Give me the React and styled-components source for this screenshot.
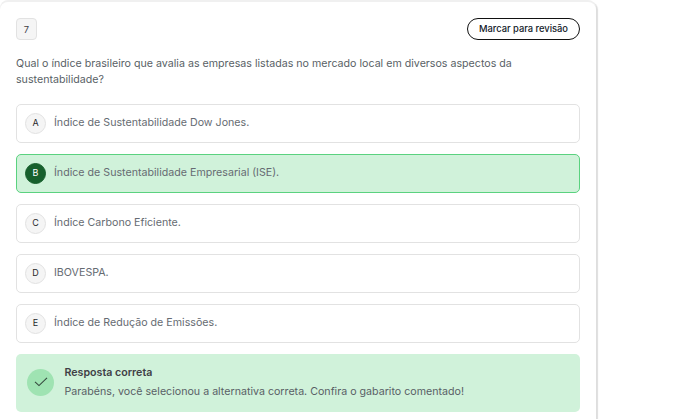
import React from "react";
import styled, { createGlobalStyle } from "styled-components";

const GlobalStyle = createGlobalStyle`
    html, body {
        margin: 0;
        padding: 0;
        height: 419px;
        overflow: hidden;
        background: #ffffff;
        font-family: "Inter", "Liberation Sans", sans-serif;
    }
`;

const Page = styled.div`
    width: 695px;
    height: 419px;
    overflow: hidden;
    box-sizing: border-box;
    padding-top: 2px;
    background: #ffffff;
`;

const Card = styled.div`
    width: 596px;
    height: 440px;
    box-sizing: border-box;
    padding: 16px 16px 0 16px;
    background: #ffffff;
    border-radius: 8px 8px 0 0;
    box-shadow: 0 -2px 0 #f0f0f0, 2px 0 1px #dedede;
`;

const Header = styled.div`
    display: flex;
    justify-content: space-between;
    align-items: center;
    height: 22px;
`;

const Number = styled.div`
    width: 21px;
    height: 22px;
    box-sizing: border-box;
    display: flex;
    align-items: center;
    justify-content: center;
    border: 1px solid #e2e2e2;
    border-radius: 4px;
    background: #f5f5f5;
    color: #3f3f46;
    font-size: 9.33px;
`;

const ReviewButton = styled.button`
    width: 113px;
    height: 22px;
    padding: 0 0 1px 0;
    border: 1px solid #111111;
    border-radius: 11px;
    background: #ffffff;
    color: #111827;
    font-family: inherit;
    font-size: 9.33px;
    font-weight: 500;
`;

const Question = styled.p`
    margin: 16px 0 16px 0;
    color: #595f66;
    font-size: 10.66px;
    line-height: 16px;
`;

const Options = styled.div`
    display: flex;
    flex-direction: column;
    gap: 11px;
`;

const Option = styled.div`
    height: 39px;
    box-sizing: border-box;
    display: flex;
    align-items: center;
    gap: 8px;
    padding-left: 8px;
    border: 1px solid ${(p) => (p.$selected ? "#5ad27f" : "#e2e2e2")};
    border-radius: 5px;
    background: ${(p) => (p.$selected ? "#d0f2da" : "#ffffff")};
`;

const Letter = styled.div`
    width: 21px;
    height: 21px;
    box-sizing: border-box;
    flex-shrink: 0;
    display: flex;
    align-items: center;
    justify-content: center;
    padding-bottom: 2px;
    border-radius: 50%;
    border: 1px solid ${(p) => (p.$selected ? "#17602d" : "#e2e2e2")};
    background: ${(p) => (p.$selected ? "#17602d" : "#f5f5f5")};
    color: ${(p) => (p.$selected ? "#ffffff" : "#27272a")};
    font-size: 9px;
    font-weight: 400;
`;

const OptionText = styled.span`
    color: #666b72;
    font-size: 10.66px;
    position: relative;
    top: -1px;
`;

const Feedback = styled.div`
    height: 58px;
    box-sizing: border-box;
    margin-top: 11px;
    display: flex;
    align-items: center;
    gap: 11px;
    padding: 0 0 2px 11px;
    border-radius: 5px;
    background: #d0f2da;
`;

const CheckCircle = styled.div`
    width: 27px;
    height: 27px;
    flex-shrink: 0;
    display: flex;
    align-items: center;
    justify-content: center;
    border-radius: 50%;
    background: #9fe3b2;
`;

const FeedbackBody = styled.div`
    display: flex;
    flex-direction: column;
    gap: 3px;
    margin-left: -0.5px;
`;

const FeedbackTitle = styled.strong`
    color: #3f3f46;
    font-size: 10.66px;
    font-weight: 600;
    line-height: 16px;
`;

const FeedbackText = styled.span`
    color: #595f66;
    font-size: 10.66px;
    line-height: 16px;
`;

const options = [
    ["A", "Índice de Sustentabilidade Dow Jones."],
    ["B", "Índice de Sustentabilidade Empresarial (ISE)."],
    ["C", "Índice Carbono Eficiente."],
    ["D", "IBOVESPA."],
    ["E", "Índice de Redução de Emissões."],
];

export default function App() {
    return (
        <Page>
            <GlobalStyle />
            <Card>
                <Header>
                    <Number>7</Number>
                    <ReviewButton>Marcar para revisão</ReviewButton>
                </Header>
                <Question>
                    Qual o índice brasileiro que avalia as empresas listadas no mercado local em diversos aspectos da sustentabilidade?
                </Question>
                <Options>
                    {options.map(([letter, text]) => (
                        <Option key={letter} $selected={letter === "B"}>
                            <Letter $selected={letter === "B"}>{letter}</Letter>
                            <OptionText>{text}</OptionText>
                        </Option>
                    ))}
                </Options>
                <Feedback>
                    <CheckCircle>
                        <svg width="14" height="10" viewBox="0 0 14 10" fill="none">
                            <path d="M1 4.8 L5 8.6 L13 0.8" stroke="#35493e" strokeWidth="1.1" />
                        </svg>
                    </CheckCircle>
                    <FeedbackBody>
                        <FeedbackTitle>Resposta correta</FeedbackTitle>
                        <FeedbackText>Parabéns, você selecionou a alternativa correta. Confira o gabarito comentado!</FeedbackText>
                    </FeedbackBody>
                </Feedback>
            </Card>
        </Page>
    );
}
